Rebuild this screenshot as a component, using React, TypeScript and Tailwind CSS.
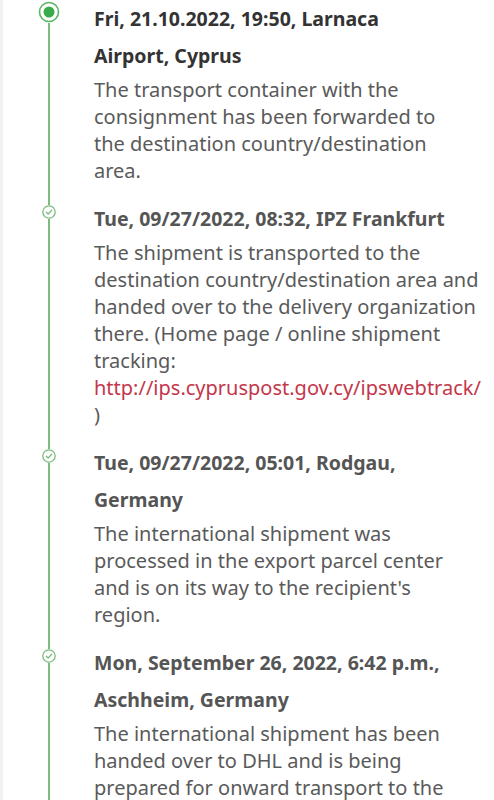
import React from "react";

type Item = {
  heading: string;
  body: React.ReactNode;
  first?: boolean;
};

const items: Item[] = [
  {
    heading: "Fri, 21.10.2022, 19:50, Larnaca Airport, Cyprus",
    body: "The transport container with the consignment has been forwarded to the destination country/destination area.",
    first: true,
  },
  {
    heading: "Tue, 09/27/2022, 08:32, IPZ Frankfurt",
    body: (
      <>
        The shipment is transported to the destination country/destination area and handed over to the delivery organization there. (Home page / online shipment tracking:{" "}
        <span className="text-[#c4364a] whitespace-nowrap">http://ips.cypruspost.gov.cy/ipswebtrack/</span> )
      </>
    ),
  },
  {
    heading: "Tue, 09/27/2022, 05:01, Rodgau, Germany",
    body: "The international shipment was processed in the export parcel center and is on its way to the recipient's region.",
  },
  {
    heading: "Mon, September 26, 2022, 6:42 p.m., Aschheim, Germany",
    body: "The international shipment has been handed over to DHL and is being prepared for onward transport to the destination country.",
  },
];

function CurrentMarker() {
  return (
    <svg width="22" height="22" viewBox="0 0 22 22" className="shrink-0">
      <circle cx="11" cy="11" r="9.5" fill="#fff" stroke="#5cb565" strokeWidth="1.6" />
      <circle cx="11" cy="11" r="5.5" fill="#3aab4a" />
    </svg>
  );
}

function CheckMarker() {
  return (
    <svg width="14" height="14" viewBox="0 0 14 14" className="shrink-0">
      <circle cx="7" cy="7" r="6.2" fill="#fff" stroke="#78bd7c" strokeWidth="1.3" />
      <path d="M4.3 7.2 L6.2 9 L9.7 5.3" fill="none" stroke="#78bd7c" strokeWidth="1.3" strokeLinecap="round" strokeLinejoin="round" />
    </svg>
  );
}

export default function App() {
  return (
    <div
      className="min-h-[800px] w-[494px] bg-white flex overflow-hidden"
      style={{ fontFamily: '"Noto Sans", "Open Sans", Arial, sans-serif' }}
    >
      <div className="w-[3px] bg-[#f1f1f1] shrink-0" />
      <div className="flex-1 flex flex-col">
        {items.map((it, i) => (
          <div key={i} className="flex">
            <div className="w-[91px] shrink-0 flex flex-col items-center">
              {it.first ? (
                <div className="h-[1px]" />
              ) : (
                <div className="h-[5px] w-[2px] bg-[#7cbd7f]" />
              )}
              {it.first ? <CurrentMarker /> : <CheckMarker />}
              <div className="flex-1 w-[2px] bg-[#7cbd7f]" />
            </div>
            <div className="flex-1 min-w-0 pr-[17px] pb-[16px]">
              <div
                className={
                  "max-w-[356px] text-[19.5px] leading-[37px] font-bold " +
                  (it.first ? "text-[#333333]" : "text-[#555555]")
                }
              >
                {it.heading}
              </div>
              <div
                className={
                  "mt-[2px] text-[20px] leading-[27px] text-[#5a5a5a] " +
                  (it.first ? "max-w-[372px]" : "")
                }
              >
                {it.body}
              </div>
            </div>
          </div>
        ))}
      </div>
      <div className="w-[4px] bg-[#efefef] shrink-0" />
    </div>
  );
}
